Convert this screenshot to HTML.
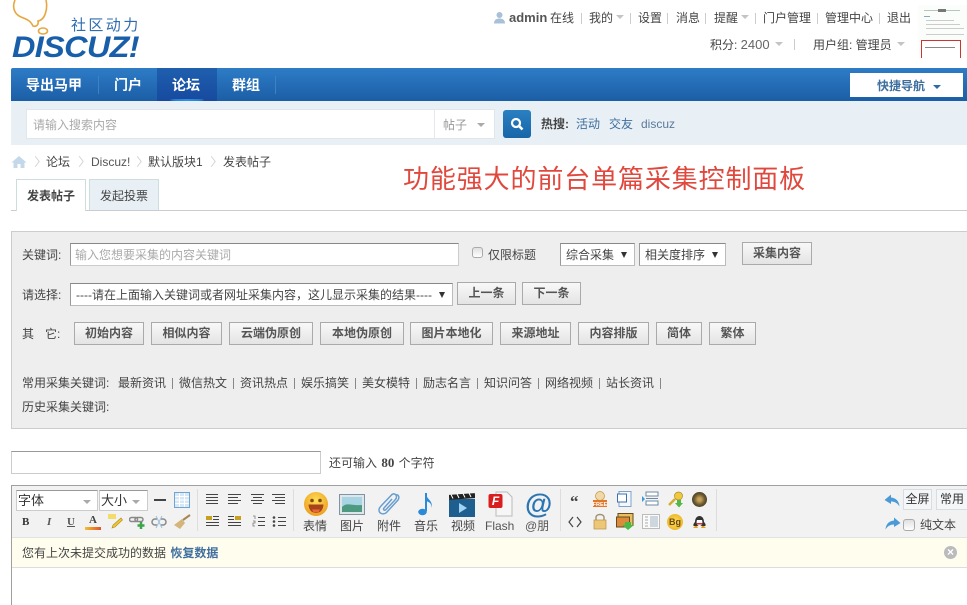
<!DOCTYPE html>
<html lang="zh"><head><meta charset="utf-8"><title>发表帖子</title>
<style>
html,body{margin:0;padding:0;background:#fff;}
body{width:967px;height:605px;position:relative;overflow:hidden;font:12px/16px "Liberation Sans","Noto Sans CJK SC",sans-serif;color:#444;}
.a,.t{position:absolute;}
.t{white-space:nowrap;}
.b{font-weight:bold;}
.sep{position:absolute;width:1px;height:11px;background:#ccc;}
.tri{position:absolute;width:0;height:0;border-left:4px solid transparent;border-right:4px solid transparent;border-top:4px solid #c4c4c4;}
.navt{position:absolute;top:76px;color:#fff;font-size:14px;line-height:18px;font-weight:bold;white-space:nowrap;}
.btn{position:absolute;box-sizing:border-box;height:23px;border:1px solid #aaa;background:linear-gradient(#f8f8f8,#e4e4e4);text-align:center;font-weight:bold;line-height:21px;color:#555;white-space:nowrap;}
.sel{position:absolute;box-sizing:border-box;height:23px;background:#fff;border:1px solid #bbb;border-top-color:#888;border-left-color:#999;line-height:22px;color:#444;white-space:nowrap;padding-left:5px;}
.sel i{position:absolute;right:7px;top:8px;width:0;height:0;border-left:3.5px solid transparent;border-right:3.5px solid transparent;border-top:6px solid #333;}
.k{position:absolute;top:375px;white-space:nowrap;color:#444;}
.ic{position:absolute;}
.lab{position:absolute;top:518px;white-space:nowrap;color:#444;}
.chev{position:absolute;top:157px;width:6px;height:6px;border-top:1px solid #d4d4d4;border-right:1px solid #d4d4d4;transform:rotate(45deg) skew(8deg,8deg);margin-top:1px;}
</style></head><body>

<!-- logo -->
<svg class="ic" style="left:11px;top:0" width="50" height="36" viewBox="0 0 50 36"><path d="M4 0 C1 7 3 14 10 17 C15 19 19 20 22 26 C25 27 28 25 27 21 C34 20 37 9 35 0" fill="#fff" stroke="#e6a73e" stroke-width="1.6"/><ellipse cx="32" cy="31" rx="4.500" ry="3" fill="#fff" stroke="#e6a73e" stroke-width="1.6"/></svg>
<div class="t" style="left:71px;top:17px;font-size:15px;line-height:18px;color:#2f6cae;letter-spacing:2.400px">社区动力</div>
<div class="t" style="left:12px;top:33px;font-size:30px;line-height:30px;font-weight:bold;font-style:italic;color:#185ea8;letter-spacing:-0.6px;transform:scaleX(1.08);transform-origin:left">DISCUZ!</div>

<!-- top right -->
<svg class="ic" style="left:493px;top:11px" width="13" height="13" viewBox="0 0 13 13"><circle cx="6.5" cy="4" r="3" fill="#a8c0d8"/><path d="M1 12.5 C1 8.5 4 7.5 6.5 7.5 C9 7.5 12 8.5 12 12.500Z" fill="#a8c0d8"/></svg>
<div class="t b" style="left:509px;top:10px;font-size:13px;color:#555">admin</div>
<div class="t" style="left:550px;top:10px">在线</div>
<div class="sep" style="left:581px;top:13px"></div>
<div class="t" style="left:589px;top:10px">我的</div><div class="tri" style="left:616px;top:15px"></div>
<div class="sep" style="left:630px;top:13px"></div>
<div class="t" style="left:638px;top:10px">设置</div>
<div class="sep" style="left:667px;top:13px"></div>
<div class="t" style="left:676px;top:10px">消息</div>
<div class="sep" style="left:705px;top:13px"></div>
<div class="t" style="left:714px;top:10px">提醒</div><div class="tri" style="left:741px;top:15px"></div>
<div class="sep" style="left:755px;top:13px"></div>
<div class="t" style="left:763px;top:10px">门户管理</div>
<div class="sep" style="left:817px;top:13px"></div>
<div class="t" style="left:825px;top:10px">管理中心</div>
<div class="sep" style="left:879px;top:13px"></div>
<div class="t" style="left:887px;top:10px">退出</div>
<div class="t" style="left:710px;top:37px">积分: <span style="color:#666;font-size:13px">2400</span></div><div class="tri" style="left:775px;top:42px"></div>
<div class="sep" style="left:794px;top:39px"></div>
<div class="t" style="left:813px;top:37px">用户组: 管理员</div><div class="tri" style="left:897px;top:42px"></div>

<!-- thumbnail -->
<div class="a" style="left:918px;top:5px;width:49px;height:53px;background:#fbfdfb;overflow:hidden">
 <div class="a" style="left:6px;top:5px;width:36px;height:1px;background:#b8c4c0"></div>
 <div class="a" style="left:20px;top:4px;width:8px;height:3px;background:#777"></div>
 <div class="a" style="left:6px;top:11px;width:6px;height:1px;background:#8ab"></div>
 <div class="a" style="left:8px;top:15px;width:28px;height:1px;background:#ccc"></div>
 <div class="a" style="left:8px;top:19px;width:34px;height:1px;background:#ccc"></div>
 <div class="a" style="left:8px;top:23px;width:38px;height:1px;background:#ccc"></div>
 <div class="a" style="left:8px;top:29px;width:38px;height:1px;background:#ccc"></div>
 <div class="a" style="left:3px;top:35px;width:40px;height:18px;box-sizing:border-box;border:1px solid #c33;border-bottom:0;background:#fff"></div>
 <div class="a" style="left:7px;top:42px;width:30px;height:1px;background:#888"></div>
</div>

<!-- nav -->
<div class="a" style="left:11px;top:68px;width:956px;height:33px;background:linear-gradient(#2e7cc6,#1b5ea6);border-radius:2px 0 0 0"></div>
<div class="a" style="left:157px;top:68px;width:60px;height:33px;background:linear-gradient(#1f5fae,#174a9f)"></div>
<div class="a" style="left:170px;top:99px;width:34px;height:2px;background:#2e8fe0;border-radius:50%"></div>
<div class="a" style="left:98px;top:76px;width:1px;height:18px;background:#3f82c2"></div>
<div class="a" style="left:275px;top:76px;width:1px;height:18px;background:#3f82c2"></div>
<div class="navt" style="left:26px">导出马甲</div>
<div class="navt" style="left:114px">门户</div>
<div class="navt" style="left:172px">论坛</div>
<div class="navt" style="left:232px">群组</div>
<div class="a" style="left:850px;top:73px;width:113px;height:24px;background:#fff"></div>
<div class="t b" style="left:877px;top:78px;color:#3f6f9e;">快捷导航</div>
<div class="a" style="left:933px;top:85px;width:0;height:0;border-left:4px solid transparent;border-right:4px solid transparent;border-top:4px solid #2b6ca8"></div>

<!-- search -->
<div class="a" style="left:11px;top:101px;width:956px;height:44px;background:#e8eff5"></div>
<div class="a" style="left:26px;top:109px;width:469px;height:30px;box-sizing:border-box;background:#fff;border:1px solid #dfe6ec"></div>
<div class="a" style="left:434px;top:110px;width:1px;height:28px;background:#e3e8ec"></div>
<div class="t" style="left:33px;top:117px;color:#aaa">请输入搜索内容</div>
<div class="t" style="left:443px;top:117px;color:#999">帖子</div>
<div class="a" style="left:477px;top:123px;width:0;height:0;border-left:4px solid transparent;border-right:4px solid transparent;border-top:4px solid #aaa"></div>
<div class="a" style="left:503px;top:110px;width:28px;height:28px;border-radius:3px;background:linear-gradient(#2a80c2,#1766a8)"></div>
<svg class="ic" style="left:509px;top:116px" width="16" height="16" viewBox="0 0 16 16"><circle cx="7" cy="7" r="4" fill="none" stroke="#fff" stroke-width="2.200"/><path d="M10 10 L13.500 13.500" stroke="#fff" stroke-width="2.600"/></svg>
<div class="t b" style="left:541px;top:116px;color:#444">热搜:</div>
<div class="t" style="left:576px;top:116px;color:#3f6f9e">活动</div>
<div class="t" style="left:609px;top:116px;color:#3f6f9e">交友</div>
<div class="t" style="left:641px;top:116px;color:#5a7a9a">discuz</div>

<!-- crumbs -->
<svg class="ic" style="left:11px;top:155px" width="16" height="14" viewBox="0 0 16 14"><path d="M8 1 L0.500 7.500 L2.500 7.500 L2.500 13 L6.500 13 L6.500 9 L9.500 9 L9.500 13 L13.500 13 L13.500 7.500 L15.500 7.500Z" fill="#c3d8e8"/></svg>
<div class="chev" style="left:32px"></div>
<div class="t" style="left:46px;top:154px">论坛</div>
<div class="chev" style="left:76px"></div>
<div class="t" style="left:91px;top:154px;color:#555">Discuz!</div>
<div class="chev" style="left:134px"></div>
<div class="t" style="left:148px;top:154px">默认版块1</div>
<div class="chev" style="left:208px"></div>
<div class="t" style="left:223px;top:154px">发表帖子</div>
<div class="t" style="left:403px;top:163px;font-size:26px;line-height:32px;color:#e0483e;letter-spacing:0.87px">功能强大的前台单篇采集控制面板</div>

<!-- tabs -->
<div class="a" style="left:11px;top:210px;width:956px;height:1px;background:#ccc"></div>
<div class="a" style="left:16px;top:179px;width:70px;height:32px;box-sizing:border-box;background:#fff;border:1px solid #cdd;border-bottom:0"></div>
<div class="a" style="left:89px;top:179px;width:70px;height:31px;box-sizing:border-box;background:#e8eff5;border:1px solid #cdd;border-bottom:0"></div>
<div class="t b" style="left:27px;top:188px">发表帖子</div>
<div class="t" style="left:100px;top:188px">发起投票</div>

<!-- panel -->
<div class="a" style="left:11px;top:231px;width:960px;height:198px;box-sizing:border-box;background:#eee;border:1px solid #ccc"></div>
<div class="t" style="left:22px;top:247px">关键词:</div>
<div class="a" style="left:70px;top:243px;width:389px;height:23px;box-sizing:border-box;background:#fff;border:1px solid #ccc;border-top-color:#888;border-left-color:#999"></div>
<div class="t" style="left:75px;top:247px;color:#aaa">输入您想要采集的内容关键词</div>
<div class="a" style="left:472px;top:247px;width:11px;height:11px;box-sizing:border-box;border:1px solid #aaa;border-radius:3px;background:linear-gradient(#e0e0e0,#fff)"></div>
<div class="t" style="left:488px;top:247px">仅限标题</div>
<div class="sel" style="left:560px;top:243px;width:75px">综合采集<i></i></div>
<div class="sel" style="left:639px;top:243px;width:87px">相关度排序<i></i></div>
<div class="btn" style="left:742px;top:242px;width:70px">采集内容</div>

<div class="t" style="left:22px;top:287px">请选择:</div>
<div class="sel" style="left:70px;top:283px;width:383px">----请在上面输入关键词或者网址采集内容，这儿显示采集的结果----<i></i></div>
<div class="btn" style="left:457px;top:282px;width:59px">上一条</div>
<div class="btn" style="left:522px;top:282px;width:59px">下一条</div>

<div class="t" style="left:22px;top:326px">其</div><div class="t" style="left:45px;top:326px">它:</div>
<div class="btn" style="left:74px;top:322px;width:70px">初始内容</div>
<div class="btn" style="left:151px;top:322px;width:71px">相似内容</div>
<div class="btn" style="left:229px;top:322px;width:84px">云端伪原创</div>
<div class="btn" style="left:320px;top:322px;width:84px">本地伪原创</div>
<div class="btn" style="left:410px;top:322px;width:83px">图片本地化</div>
<div class="btn" style="left:500px;top:322px;width:71px">来源地址</div>
<div class="btn" style="left:578px;top:322px;width:71px">内容排版</div>
<div class="btn" style="left:656px;top:322px;width:46px">简体</div>
<div class="btn" style="left:709px;top:322px;width:47px">繁体</div>

<div class="k" style="left:22px">常用采集关键词:</div>
<div class="k" style="left:118px">最新资讯</div><div class="sep" style="left:172px;top:378px;background:#888"></div>
<div class="k" style="left:179px">微信热文</div><div class="sep" style="left:233px;top:378px;background:#888"></div>
<div class="k" style="left:240px">资讯热点</div><div class="sep" style="left:294px;top:378px;background:#888"></div>
<div class="k" style="left:301px">娱乐搞笑</div><div class="sep" style="left:355px;top:378px;background:#888"></div>
<div class="k" style="left:362px">美女模特</div><div class="sep" style="left:416px;top:378px;background:#888"></div>
<div class="k" style="left:423px">励志名言</div><div class="sep" style="left:477px;top:378px;background:#888"></div>
<div class="k" style="left:484px">知识问答</div><div class="sep" style="left:538px;top:378px;background:#888"></div>
<div class="k" style="left:545px">网络视频</div><div class="sep" style="left:599px;top:378px;background:#888"></div>
<div class="k" style="left:606px">站长资讯</div><div class="sep" style="left:660px;top:378px;background:#888"></div>
<div class="t" style="left:22px;top:399px">历史采集关键词:</div>

<!-- subject -->
<div class="a" style="left:11px;top:451px;width:310px;height:23px;box-sizing:border-box;background:#fff;border:1px solid #ccc;border-top-color:#999"></div>
<div class="t" style="left:329px;top:455px">还可输入 <b style="font-size:13px;margin:0 1px;font-family:'Liberation Serif',serif">80</b> 个字符</div>

<!-- editor -->
<div class="a" style="left:11px;top:485px;width:956px;height:120px;box-sizing:border-box;border-top:1px solid #a0a0a0;border-left:1px solid #a0a0a0;background:#fff"></div>
<div class="a" style="left:12px;top:486px;width:955px;height:51px;background:#f2f2f2;border-bottom:1px solid #e2e2e2"></div>
<div class="a" style="left:12px;top:538px;width:955px;height:29px;background:#fffdee;border-bottom:1px solid #ddd"></div>

<div class="a" style="left:16px;top:490px;width:82px;height:21px;box-sizing:border-box;background:#fff;border:1px solid #ccc;border-top-color:#999"></div>
<div class="t" style="left:18px;top:493px;font-size:13px;color:#333">字体</div>
<div class="a" style="left:83px;top:500px;width:0;height:0;border-left:4px solid transparent;border-right:4px solid transparent;border-top:4px solid #aaa"></div>
<div class="a" style="left:99px;top:490px;width:49px;height:21px;box-sizing:border-box;background:#fff;border:1px solid #ccc;border-top-color:#999"></div>
<div class="t" style="left:101px;top:493px;font-size:13px;color:#333">大小</div>
<div class="a" style="left:132px;top:500px;width:0;height:0;border-left:4px solid transparent;border-right:4px solid transparent;border-top:4px solid #aaa"></div>
<div class="a" style="left:154px;top:499px;width:12px;height:2px;background:#444"></div>
<svg class="ic" style="left:174px;top:492px" width="16" height="16" viewBox="0 0 16 16"><rect x=".5" y=".5" width="15" height="15" fill="#d6e8f5" stroke="#6fa5cf"/><path d="M1 4.500H15M1 8H15M1 11.500H15M5.500 1V15M10.500 1V15" stroke="#fff"/></svg>

<div class="t" style="left:22px;top:515px;font:bold 11px/14px 'Liberation Serif',serif;color:#333">B</div>
<div class="t" style="left:47px;top:515px;font:italic bold 11px/14px 'Liberation Serif',serif;color:#555">I</div>
<div class="t" style="left:67px;top:515px;font:bold 11px/14px 'Liberation Serif',serif;color:#555;text-decoration:underline">U</div>
<div class="t" style="left:89px;top:514px;font:bold 11px/13px 'Liberation Serif',serif;color:#444">A</div>
<div class="a" style="left:85px;top:527px;width:16px;height:3px;background:linear-gradient(90deg,#f2c230,#e2502a)"></div>
<svg class="ic" style="left:107px;top:513px" width="17" height="17" viewBox="0 0 17 17"><path d="M1 1H9V6H1Z" fill="#f4dc6a"/><path d="M5 15 L6 12 L14 5 L15.500 7 L8 14Z" fill="#f2c52e" stroke="#a88a20" stroke-width=".6"/></svg>
<svg class="ic" style="left:129px;top:515px" width="17" height="15" viewBox="0 0 17 15"><rect x="0.500" y="2.500" width="8" height="4" rx="2" fill="none" stroke="#888" stroke-width="1.500"/><rect x="6" y="2.500" width="8" height="4" rx="2" fill="none" stroke="#888" stroke-width="1.500"/><path d="M12 7V14M8.500 10.500H15.500" stroke="#3aa54a" stroke-width="2.500"/></svg>
<svg class="ic" style="left:151px;top:515px" width="16" height="15" viewBox="0 0 16 15"><path d="M6 4H4A3 3 0 0 0 4 10H6M10 4H12A3 3 0 0 1 12 10H10" fill="none" stroke="#888" stroke-width="1.500"/><path d="M5 1L11 13M11 1L5 13" stroke="#9cc0dc"/></svg>
<svg class="ic" style="left:173px;top:514px" width="18" height="16" viewBox="0 0 18 16"><path d="M17 1L10 6" stroke="#a5855a" stroke-width="2"/><path d="M1 11L9 5L12 9L7 15Z" fill="#d4b67a"/></svg>
<div class="a" style="left:197px;top:489px;width:1px;height:42px;background:#ddd"></div>

<svg class="ic" style="left:205px;top:492px" width="90" height="16" viewBox="0 0 90 16" stroke="#444"><path d="M1 2.500H13M1 5.500H13M1 8.500H13M1 11.500H13" /><path d="M23 2.500H36M23 5.500H33M23 8.500H36M23 11.500H33" /><path d="M46 2.500H59M48 5.500H57M46 8.500H59M48 11.500H57" /><path d="M67 2.500H80M70 5.500H80M67 8.500H80M70 11.500H80" /></svg>
<svg class="ic" style="left:205px;top:514px" width="84" height="15" viewBox="0 0 84 15"><rect x="1" y="2" width="6" height="4" fill="#c8a020"/><path d="M8 2.500H14M8 5.500H14M1 8.500H14M1 11.500H14" stroke="#444"/><rect x="30" y="2" width="6" height="4" fill="#c8a020"/><path d="M23 2.500H29M23 5.500H29M23 8.500H36M23 11.500H36" stroke="#444"/><path d="M53 3.500H60M53 7.500H60M53 11.500H60" stroke="#444"/><path d="M48 2H50V5M48 7H50V9H48V12H50" stroke="#777" fill="none" stroke-width=".8"/><circle cx="69" cy="3.500" r="1.300" fill="#444"/><circle cx="69" cy="7.500" r="1.300" fill="#444"/><circle cx="69" cy="11.500" r="1.300" fill="#444"/><path d="M73 3.500H81M73 7.500H81M73 11.500H81" stroke="#444"/></svg>
<div class="a" style="left:293px;top:489px;width:1px;height:42px;background:#ddd"></div>

<!-- big icons -->
<svg class="ic" style="left:303px;top:491px" width="26" height="26" viewBox="0 0 26 26"><defs><radialGradient id="f" cx=".5" cy=".35" r=".7"><stop offset="0" stop-color="#ffdd55"/><stop offset="1" stop-color="#ea9a1a"/></radialGradient></defs><circle cx="13" cy="13" r="12" fill="url(#f)"/><circle cx="9" cy="9.500" r="1.800" fill="#7a4a10"/><circle cx="17" cy="9.500" r="1.800" fill="#7a4a10"/><path d="M5.500 13.500 H20.500 C20 20 16.500 22 13 22 C9.500 22 6 20 5.500 13.500Z" fill="#a8421a"/><path d="M9 18.500 H17 L15.500 21.500H10.500Z" fill="#e86a3a"/></svg>
<svg class="ic" style="left:339px;top:494px" width="26" height="21" viewBox="0 0 26 21"><rect x=".5" y=".5" width="25" height="20" fill="#dfe6ea" stroke="#7f95a6"/><rect x="3" y="3" width="20" height="15" fill="#a8d4e4"/><path d="M3 13 C8 8 12 12 23 11 V18 H3Z" fill="#4e9a80"/></svg>
<svg class="ic" style="left:377px;top:492px" width="24" height="25" viewBox="0 0 24 25"><path d="M19 3 C21 2 23 5 21 8 L9.500 20.500 C7 23 2 22 2 18 C2 16 3 15 4 14 L14 3.500 C16 1 19.500 1.500 19.500 5 C19.500 6 19 7 18 8 L9 17.500 C7.500 19 5.500 17.500 7 16 L15 7" fill="none" stroke="#6a9ed0" stroke-width="1.500"/></svg>
<svg class="ic" style="left:418px;top:492px" width="17" height="25" viewBox="0 0 17 25"><path d="M8 1 V19" stroke="#2a8ad8" stroke-width="2"/><ellipse cx="4.500" cy="20" rx="4.300" ry="3.200" fill="#2a8ad8"/><path d="M8 2 C9 8 16 9 13 16 C14 11 11 10 8 9Z" fill="#2a8ad8"/></svg>
<svg class="ic" style="left:449px;top:492px" width="26" height="25" viewBox="0 0 26 25"><rect x="0" y="7" width="26" height="18" fill="#1f5f8f"/><rect x="0" y="2" width="26" height="5" fill="#222" transform="rotate(-4 13 4)"/><path d="M2 2.500l2 4M8 2l2 4M14 1.500l2 4M20 1l2 4" stroke="#fff"/><path d="M10 11 L18 16 L10 21Z" fill="#9fd4f2"/></svg>
<svg class="ic" style="left:488px;top:491px" width="25" height="26" viewBox="0 0 25 26"><path d="M8 1 H19 L24 6 V25 H8Z" fill="#f6f6f6" stroke="#bbb"/><rect x="0.500" y="3" width="14" height="14" rx="2" fill="#d81e1e"/><text x="7.500" y="14" font-family="Liberation Sans,sans-serif" font-weight="bold" font-style="italic" font-size="12" fill="#fff" text-anchor="middle">F</text></svg>
<div class="t" style="left:525px;top:488px;font:bold 28px/32px 'Liberation Sans',sans-serif;color:#2a76b2">@</div>
<div class="lab" style="left:303px">表情</div>
<div class="lab" style="left:340px">图片</div>
<div class="lab" style="left:377px">附件</div>
<div class="lab" style="left:414px">音乐</div>
<div class="lab" style="left:451px">视频</div>
<div class="lab" style="left:485px;color:#555">Flash</div>
<div class="lab" style="left:525px;color:#555">@朋</div>
<div class="a" style="left:560px;top:489px;width:1px;height:42px;background:#ddd"></div>

<!-- small icons -->
<div class="t" style="left:570px;top:492px;font:bold 17px/20px 'Liberation Serif',serif;color:#444">“</div>
<svg class="ic" style="left:568px;top:515px" width="14" height="14" viewBox="0 0 14 14"><path d="M5 2L1 7L5 12M9 2L13 7L9 12" fill="none" stroke="#444" stroke-width="1.200"/></svg>
<svg class="ic" style="left:592px;top:491px" width="16" height="17" viewBox="0 0 16 17"><circle cx="8" cy="5" r="4.500" fill="#f0d9a8" stroke="#c8903a" stroke-width=".7"/><rect x="1" y="9" width="14" height="7" fill="#e2762a"/><text x="8" y="15" font-family="Liberation Sans,sans-serif" font-weight="bold" font-size="5.500" fill="#fff" text-anchor="middle">FREE</text></svg>
<svg class="ic" style="left:592px;top:513px" width="16" height="17" viewBox="0 0 16 17"><path d="M4 8V4.500C4 0.500 12 0.500 12 4.500V8" fill="none" stroke="#a09070" stroke-width="1.400"/><rect x="2" y="7" width="12" height="9" fill="#ecc778" stroke="#b89040" stroke-width=".7"/></svg>
<svg class="ic" style="left:617px;top:491px" width="15" height="16" viewBox="0 0 15 16"><rect x="2" y=".5" width="12" height="15" fill="#f4f8fc" stroke="#7ba4cc"/><rect x="0.500" y="3" width="9" height="8" fill="#fff" stroke="#3c70b0"/></svg>
<svg class="ic" style="left:616px;top:513px" width="18" height="17" viewBox="0 0 18 17"><rect x="2" y=".5" width="15" height="12" fill="#e9c060" stroke="#664a20"/><rect x="0.500" y="4" width="13" height="10" fill="#dd8a3a" stroke="#664a20"/><path d="M9 9H15V12H18L12 17L6 12H9Z" fill="#4cb848"/></svg>
<svg class="ic" style="left:641px;top:491px" width="18" height="16" viewBox="0 0 18 16"><path d="M5 1H17V5H5ZM5 10H17V14H5Z" fill="#fff" stroke="#6f8aa5"/><path d="M5 7.500H17" stroke="#6f8aa5"/><path d="M1 5V11L4 8Z" fill="#3b9ad8"/></svg>
<svg class="ic" style="left:642px;top:514px" width="18" height="15" viewBox="0 0 18 15"><rect x=".5" y=".5" width="17" height="14" fill="#fafafa" stroke="#bbb"/><rect x="8" y="2" width="8" height="11" fill="#cfd7de"/><path d="M3 3H6M3 6H6M3 9H6M3 12H6" stroke="#aaa"/></svg>
<svg class="ic" style="left:667px;top:491px" width="17" height="17" viewBox="0 0 17 17"><circle cx="11.500" cy="5" r="4" fill="#f0c840" stroke="#a98a20" stroke-width=".7"/><path d="M8 8L2 14" stroke="#d4ad30" stroke-width="2.500"/><path d="M10 9H14V12H16L12 16.500L8 12H10Z" fill="#52b848"/></svg>
<div class="a" style="left:667px;top:514px;width:16px;height:16px;border-radius:50%;background:radial-gradient(#ffe05a,#e8a818);font:bold 9px/16px 'Liberation Sans',sans-serif;text-align:center;color:#6a4a10">Bg</div>
<div class="a" style="left:692px;top:492px;width:15px;height:15px;box-sizing:border-box;border-radius:50%;background:radial-gradient(#c8a25a 15%,#6a5a30 50%,#222 100%);"></div>
<svg class="ic" style="left:692px;top:513px" width="15" height="16" viewBox="0 0 15 16"><path d="M3 9C3 1 12 1 12 9C14 11 14 13 13 13L2 13C1 13 1 11 3 9Z" fill="#333"/><path d="M5 7H10C11 10 10 13 7.500 13C5 13 4 10 5 7Z" fill="#fff"/><path d="M1 15H6L5 13H3ZM9 15H14L12 13H10Z" fill="#e2a020"/><path d="M4 10H11L10 11.500H5Z" fill="#d83030"/></svg>
<div class="a" style="left:716px;top:489px;width:1px;height:42px;background:#ddd"></div>

<!-- right -->
<svg class="ic" style="left:884px;top:494px" width="16" height="13" viewBox="0 0 16 13"><path d="M7 0.500L0.500 6L7 10V7.500C10 7.500 13 8.500 15.500 12.500C15 7 12 4 7 3.500Z" fill="#4a9ad8"/></svg>
<svg class="ic" style="left:885px;top:517px" width="16" height="13" viewBox="0 0 16 13"><path d="M9 0.500L15.500 6L9 10V7.500C6 7.500 3 8.500 0.500 12.500C1 7 4 4 9 3.500Z" fill="#4a9ad8"/></svg>
<div class="a" style="left:903px;top:489px;width:29px;height:21px;box-sizing:border-box;background:#f4f6f8;border:1px solid #d5dde5;text-align:center;line-height:19px;color:#333">全屏</div>
<div class="a" style="left:936px;top:489px;width:31px;height:21px;box-sizing:border-box;background:#f4f6f8;border:1px solid #d5dde5;border-right:0;text-align:center;line-height:19px;color:#333">常用</div>
<div class="a" style="left:903px;top:519px;width:12px;height:12px;box-sizing:border-box;border:1px solid #aaa;border-radius:3px;background:linear-gradient(#e0e0e0,#fff)"></div>
<div class="t" style="left:920px;top:517px;color:#444">纯文本</div>

<div class="t" style="left:22px;top:545px">您有上次未提交成功的数据 <b style="color:#3f6f9e;margin-left:1px">恢复数据</b></div>
<div class="a" style="left:944px;top:546px;width:13px;height:13px;border-radius:50%;background:#bbb;color:#fff;font:bold 12px/13px 'Liberation Sans',sans-serif;text-align:center">×</div>

</body></html>
